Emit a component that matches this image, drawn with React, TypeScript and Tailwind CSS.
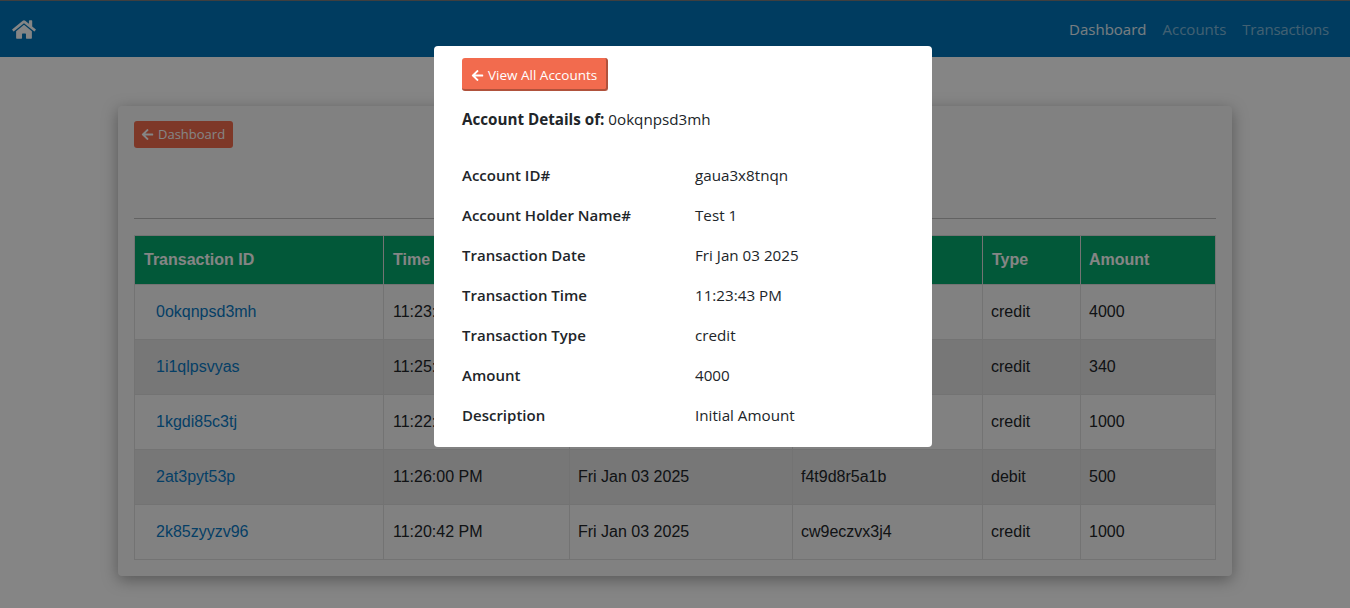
import { FaArrowLeft, FaHome } from "react-icons/fa";

const transactions = [
  { id: "0okqnpsd3mh", time: "11:23:43 PM", date: "Fri Jan 03 2025", account: "gaua3x8tnqn", type: "credit", amount: "4000" },
  { id: "1i1qlpsvyas", time: "11:25:10 PM", date: "Fri Jan 03 2025", account: "gaua3x8tnqn", type: "credit", amount: "340" },
  { id: "1kgdi85c3tj", time: "11:22:18 PM", date: "Fri Jan 03 2025", account: "f4t9d8r5a1b", type: "credit", amount: "1000" },
  { id: "2at3pyt53p", time: "11:26:00 PM", date: "Fri Jan 03 2025", account: "f4t9d8r5a1b", type: "debit", amount: "500" },
  { id: "2k85zyyzv96", time: "11:20:42 PM", date: "Fri Jan 03 2025", account: "cw9eczvx3j4", type: "credit", amount: "1000" },
];

const details = [
  ["Account ID#", "gaua3x8tnqn"],
  ["Account Holder Name#", "Test 1"],
  ["Transaction Date", "Fri Jan 03 2025"],
  ["Transaction Time", "11:23:43 PM"],
  ["Transaction Type", "credit"],
  ["Amount", "4000"],
  ["Description", "Initial Amount"],
];

export default function App() {
  return (
    <div className="relative h-[608px] overflow-hidden bg-white font-['Open_Sans',sans-serif] text-[#212529]">
      <nav className="flex h-[57px] items-center justify-between border-t border-[#7a7a7a] bg-[#0074b8] pl-3 pr-[21px]">
        <FaHome className="h-[21px] w-6 text-white" />
        <div className="flex gap-4 text-[15px]">
          <span className="text-white/90">Dashboard</span>
          <span className="text-white/50">Accounts</span>
          <span className="tracking-[-0.2px] text-white/50">Transactions</span>
        </div>
      </nav>

      <div className="px-[118px] pt-[49px]">
        <div className="h-[470px] rounded bg-[#f8f8f8] px-4 pt-[15px] shadow-[0_4px_16px_rgba(0,0,0,0.35)]">
          <button className="flex h-[27px] w-[99px] items-center gap-1 rounded-[3px] bg-[#f26b4e] pl-[7px] text-[13px] text-white">
            <FaArrowLeft className="h-[13px] w-[13px]" /> Dashboard
          </button>
          <hr className="mt-[70px] border-[#bdbdbd]" />
          <table className="mt-4 w-[1081px] table-fixed border-collapse font-['Liberation_Sans',sans-serif] text-base">
            <colgroup>
              <col className="w-[249px]" />
              <col className="w-[186px]" />
              <col className="w-[223px]" />
              <col className="w-[190px]" />
              <col className="w-[98px]" />
              <col className="w-[135px]" />
            </colgroup>
            <thead>
              <tr className="h-[49px] bg-[#04aa6d] text-left text-white">
                <th className="border border-[#ddd] px-[9px] font-bold">Transaction ID</th>
                <th className="border border-[#ddd] px-[9px] font-bold">Time</th>
                <th className="border border-[#ddd] px-2 font-bold">Date</th>
                <th className="border border-[#ddd] px-2 font-bold">Account ID</th>
                <th className="border border-[#ddd] px-[9px] font-bold">Type</th>
                <th className="border border-[#ddd] px-2 font-bold">Amount</th>
              </tr>
            </thead>
            <tbody>
              {transactions.map((t, i) => (
                <tr key={t.id} className={i % 2 === 1 ? "h-[55px] bg-[#e4e4e4]" : "h-[55px]"}>
                  <td className="border border-[#ddd] px-[9px]">
                    <a className="pl-3 text-[#0a7ac4]">{t.id}</a>
                  </td>
                  <td className="border border-[#ddd] px-[9px]">{t.time}</td>
                  <td className="border border-[#ddd] px-2">{t.date}</td>
                  <td className="border border-[#ddd] px-2">{t.account}</td>
                  <td className="border border-[#ddd] px-2">{t.type}</td>
                  <td className="border border-[#ddd] px-2">{t.amount}</td>
                </tr>
              ))}
            </tbody>
          </table>
        </div>
      </div>

      <div className="absolute inset-0 bg-black/[0.48]" />

      <div className="absolute left-[434px] top-[46px] h-[401px] w-[498px] rounded bg-white px-7 pt-3 text-[15px]">
        <button className="flex h-[33px] w-[146px] items-center gap-1 rounded-[3px] border-r-2 border-b-2 border-[#b0523c] bg-[#f26b4e] pl-[9px] pt-[3px] text-[13.5px] font-medium text-white">
          <FaArrowLeft className="h-[13px] w-[13px]" /> View All Accounts
        </button>
        <p className="mt-[17px] text-[15.2px] leading-[22px]">
          <b className="font-bold">Account Details of:</b> 0okqnpsd3mh
        </p>
        <div className="mt-[25px] flex flex-col">
          {details.map(([label, value]) => (
            <div key={label} className="flex h-10 items-center">
              <span className="w-[233px] font-semibold">{label}</span>
              <span className="text-[15.2px]">{value}</span>
            </div>
          ))}
        </div>
      </div>
    </div>
  );
}
